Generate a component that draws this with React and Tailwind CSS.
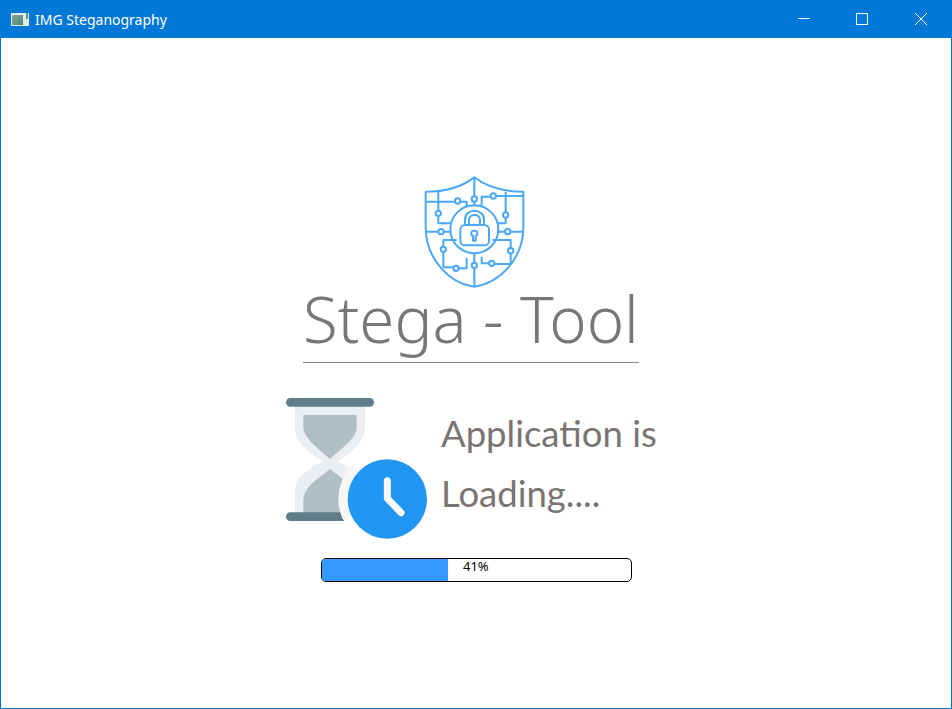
function ShieldLogo() {
  const nodes = [
    [178, 87], [128, 93], [70, 130], [78, 185], [85, 238], [123, 295],
    [178, 286], [230, 280], [287, 242], [278, 185], [272, 135], [235, 78],
  ];
  return (
    <svg width="120" height="125" viewBox="0 0 360 375" fill="none" stroke="#4aa8f7" strokeWidth="6" strokeLinejoin="round">
      <path d="M178 22C135 55 85 65 32 65L32 170C32 270 105 340 178 350C251 340 325 270 325 170L325 65C270 65 220 55 178 22Z" />
      <circle cx="178" cy="178" r="72" />
      <path d="M178 22V78M178 96V106M178 250V277M178 295V350" />
      <path d="M32 95H119M137 95H155V110" />
      <path d="M70 65V121M70 139V160H107" />
      <path d="M32 185H69M87 185H106" />
      <path d="M125 210H85V229M85 247V292H114M132 295H155V264" />
      <path d="M200 110V80H226M244 78H325" />
      <path d="M272 65V126M272 144V160H248" />
      <path d="M250 185H269M287 185H325" />
      <path d="M232 210H287V233M287 251V282H239" />
      <path d="M200 260V280H221" />
      {nodes.map(([cx, cy]) => (
        <circle key={`${cx}-${cy}`} cx={cx} cy={cy} r="8" fill="white" />
      ))}
      <path d="M150 165V150C150 113 207 113 207 150V165" />
      <path d="M162 165V150C162 130 195 130 195 150V165" />
      <rect x="136" y="165" width="86" height="61" rx="14" />
      <path d="M174 198C166 194 167 182 178 182C189 182 190 194 182 198V212H174Z" />
    </svg>
  );
}

function HourglassIcon() {
  return (
    <svg width="165" height="155" viewBox="0 0 495 465">
      <path d="M60 45H270V110C270 155 235 180 200 207L165 222L130 207C95 180 60 155 60 110Z" fill="#eceff1" />
      <path d="M60 375H270V300C270 265 235 240 200 220L165 207L130 220C95 240 60 265 60 300Z" fill="#eceff1" />
      <path d="M85 75H245V110C245 145 205 170 165 207C125 170 85 145 85 110Z" fill="#b0bec5" />
      <path d="M165 237C205 270 245 290 245 335V370H85V335C85 290 125 270 165 237Z" fill="#b0bec5" />
      <rect x="33" y="24" width="264" height="26" rx="13" fill="#607d8b" />
      <rect x="33" y="367" width="264" height="26" rx="13" fill="#607d8b" />
      <circle cx="337" cy="327" r="146" fill="white" />
      <path d="M240 236A133 133 0 0 0 216 383" fill="none" stroke="#f7f7f7" strokeWidth="26" />
      <circle cx="337" cy="327" r="119" fill="#2196f3" />
      <path d="M337 272V325L378 368" fill="none" stroke="#fafafa" strokeWidth="21" strokeLinecap="round" strokeLinejoin="round" />
    </svg>
  );
}

function WindowControls() {
  return (
    <div className="ml-auto flex h-full items-center">
      <button className="flex w-[58px] items-center justify-center">
        <svg width="12" height="12" viewBox="0 0 12 12" stroke="white" fill="none"><path d="M0 5.5H12" /></svg>
      </button>
      <button className="flex w-[58px] items-center justify-center">
        <svg width="12" height="12" viewBox="0 0 12 12" stroke="white" fill="none"><rect x="0.5" y="0.5" width="11" height="11" /></svg>
      </button>
      <button className="flex w-[60px] items-center justify-center">
        <svg width="12" height="12" viewBox="0 0 12 12" stroke="white" fill="none"><path d="M0 0L12 12M12 0L0 12" /></svg>
      </button>
    </div>
  );
}

export default function App() {
  return (
    <div className="flex h-[709px] w-[952px] flex-col overflow-hidden border border-[#0078d7] bg-white">
      <header className="flex h-[37px] shrink-0 items-center bg-[#0078d7] pb-[1px] text-white">
        <div className="ml-[10px] flex h-[13px] w-[18px] items-end justify-between bg-[#e3eaea] px-[1px] pb-[1px]">
          <span className="h-[10px] w-[11px] bg-gradient-to-br from-[#8fa5a0] to-[#3f8a72]" />
          <span className="h-[6px] w-[2px] self-start bg-[#5c9484]" />
        </div>
        <span className="ml-[6px] mt-[2px] font-['Noto_Sans',sans-serif] text-[14px] leading-none">IMG Steganography</span>
        <WindowControls />
      </header>

      <main className="flex flex-col items-start pt-[132px]">
        <div className="ml-[414px]"><ShieldLogo /></div>
        <h1 className="ml-[302px] mt-[-9px] w-[336px] whitespace-nowrap border-b border-[#8a8a8a] pb-[10px] text-center font-['Noto_Sans',sans-serif] text-[63.5px] font-light leading-[66px] text-[#777777]">
          Stega - Tool
        </h1>
        <div className="ml-[274px] mt-[27px] flex">
          <HourglassIcon />
          <p className="ml-[1px] mt-[13px] font-['Lato',sans-serif] text-[36.5px] leading-[60px] text-[#7a7472]">
            Application is<br />Loading....
          </p>
        </div>
        <div className="relative ml-[320px] mt-[13px] h-[24px] w-[311px] overflow-hidden rounded-[5px] border border-black bg-white">
          <div className="h-full bg-[#3399ff]" style={{ width: '40.7%' }} />
          <span className="absolute left-[141px] top-0 font-['Noto_Sans',sans-serif] text-[13px] leading-[15px] text-black">41%</span>
        </div>
      </main>
    </div>
  );
}
